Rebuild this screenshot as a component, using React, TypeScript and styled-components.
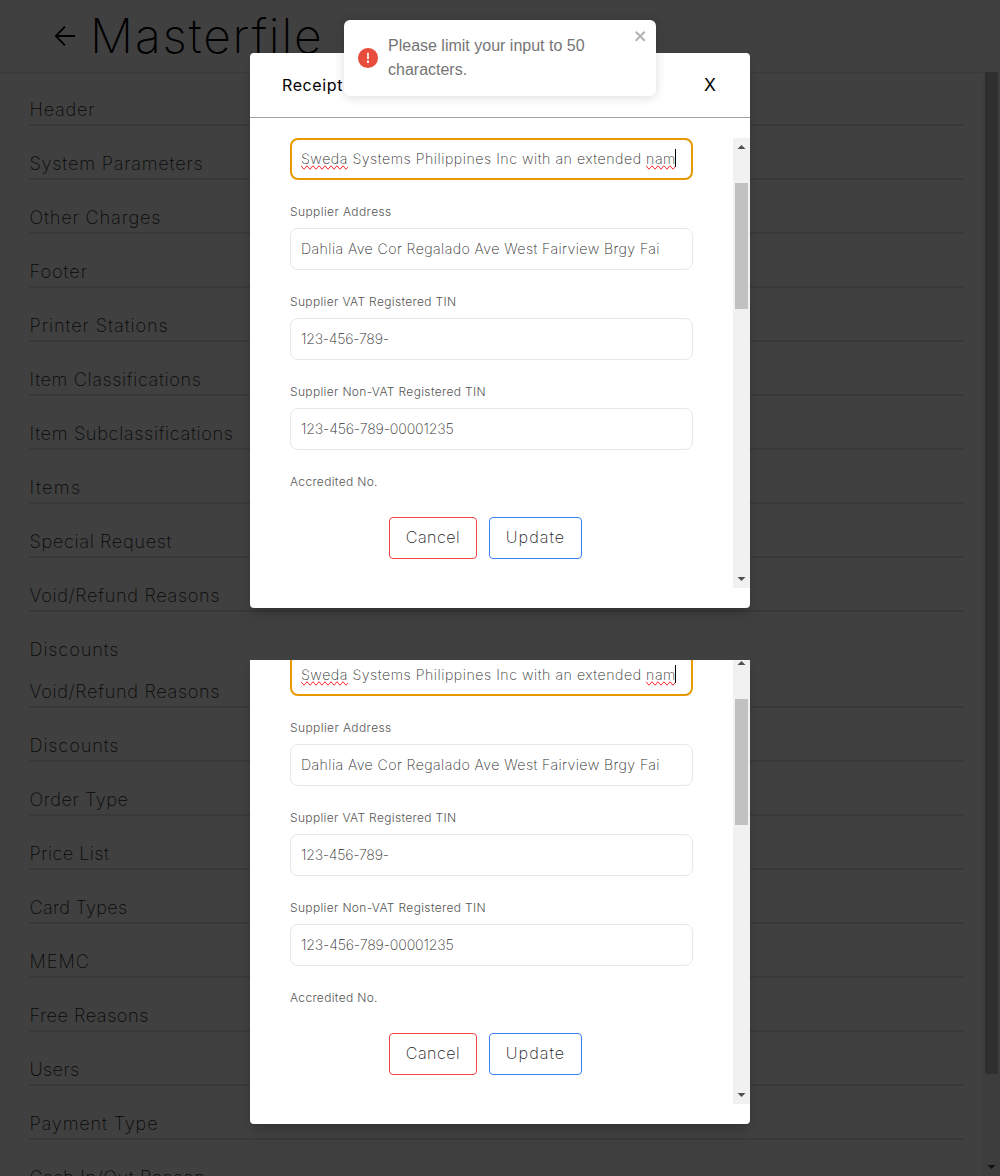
import React from "react";
import styled, { createGlobalStyle } from "styled-components";

const GlobalStyle = createGlobalStyle`
  * { box-sizing: border-box; }
  body {
    margin: 0;
    background: #404040;
    font-family: Inter, "Open Sans", sans-serif;
    font-weight: 300;
  }
`;

const Screen = styled.main`
  width: 1000px;
  height: 1176px;
  display: flex;
  flex-direction: column;
  overflow: hidden;
`;

const Frame = styled.section<{ $height: number }>`
  position: relative;
  flex: none;
  height: ${(p) => p.$height}px;
  display: flex;
  flex-direction: column;
  overflow: hidden;
  background: #404040;
`;

const PageHeader = styled.header`
  flex: none;
  height: 72px;
  padding-left: 53px;
  display: flex;
  align-items: center;
  box-shadow: 0 1px 1px #393939;
`;

const BackIcon = styled.svg`
  width: 24px;
  height: 24px;
  flex: none;
`;

const PageTitle = styled.h1`
  margin: 0 0 0 13px;
  font-size: 48px;
  font-weight: 200;
  line-height: 72px;
  letter-spacing: 1.85px;
  color: #000;
`;

const PageBody = styled.div`
  flex: 1;
  min-height: 0;
  display: flex;
`;

const List = styled.ul<{ $scroll?: number }>`
  flex: 1;
  margin: ${(p) => -(p.$scroll ?? 0)}px 19px 0 29px;
  padding: 0;
  list-style: none;
`;

const ListRow = styled.li<{ $tracking: number }>`
  height: 54px;
  padding: 25px 0 0 0.5px;
  border-bottom: 2px solid #393939;
  font-size: 18.2px;
  font-weight: 250;
  line-height: 24px;
  letter-spacing: ${(p) => p.$tracking}px;
  white-space: nowrap;
  color: #090909;
`;

const PageScrollbar = styled.div<{ $end?: boolean }>`
  width: 17px;
  flex: none;
  display: flex;
  flex-direction: column;
  align-items: center;
  justify-content: space-between;
  padding: 0 2px ${(p) => (p.$end ? 7 : 0)}px;
  background: #3d3d3d;
`;

const PageThumb = styled.div<{ $height: number }>`
  width: 13px;
  height: ${(p) => p.$height}px;
  background: #2f2f2f;
`;

const Modal = styled.div<{ $top: number; $height: number; $cut?: boolean }>`
  position: absolute;
  left: 250px;
  top: ${(p) => p.$top}px;
  width: 500px;
  height: ${(p) => p.$height}px;
  display: flex;
  flex-direction: column;
  justify-content: flex-end;
  overflow: hidden;
  background: #fff;
  border-radius: ${(p) => (p.$cut ? "0 0 4px 4px" : "4px")};
  box-shadow: 0 10px 15px -3px rgba(0, 0, 0, 0.15), 0 4px 6px -2px rgba(0, 0, 0, 0.1);
`;

const ModalHeader = styled.header`
  flex: none;
  height: 65px;
  padding: 0 34px 1px 32px;
  display: flex;
  align-items: center;
  justify-content: space-between;
  border-bottom: 1px solid #a3a3a3;
  font-size: 16px;
  font-weight: 380;
  letter-spacing: 0.6px;
  color: #000;
`;

const CloseButton = styled.span`
  font-size: 17.5px;
  letter-spacing: 0;
`;

const ModalBody = styled.div`
  flex: none;
  height: 490px;
  padding: 20px 0;
  display: flex;
`;

const Form = styled.div`
  flex: 1;
  padding: 0 40px;
`;

const Input = styled.div<{ $focused?: boolean; $tracking: number }>`
  width: 403px;
  height: 42px;
  padding: 0 0 2px ${(p) => (p.$focused ? 9 : 10)}px;
  display: flex;
  align-items: center;
  border: ${(p) => (p.$focused ? "2px solid #e69900" : "1px solid #e5e7eb")};
  border-radius: 8px;
  font-size: 14.2px;
  font-weight: 250;
  letter-spacing: ${(p) => p.$tracking}px;
  white-space: pre;
  color: #303030;
`;

const Misspelled = styled.span`
  text-decoration-line: spelling-error;
`;

const Caret = styled.span`
  width: 1px;
  height: 18px;
  margin-left: -1px;
  background: #000;
`;

const Label = styled.div<{ $tracking: number }>`
  height: 48px;
  padding-top: 24px;
  font-size: 12px;
  line-height: 16px;
  letter-spacing: ${(p) => p.$tracking}px;
  white-space: nowrap;
  color: #565656;
`;

const Actions = styled.div`
  display: flex;
  gap: 12px;
  padding: 19px 0 0 99px;
`;

const Button = styled.button<{ $color: string; $width: number; $tracking: number }>`
  width: ${(p) => p.$width}px;
  height: 42px;
  padding: 0 0 2px;
  border: 1px solid ${(p) => p.$color};
  border-radius: 4px;
  background: #fff;
  font: 250 16.2px Inter, "Open Sans", sans-serif;
  letter-spacing: ${(p) => p.$tracking}px;
  color: #222;
`;

const FormScrollbar = styled.div`
  width: 17px;
  height: 450px;
  padding: 7px 2px;
  display: flex;
  flex-direction: column;
  align-items: center;
  background: #f1f1f1;
`;

const FormThumb = styled.div`
  width: 13px;
  height: 126px;
  margin: 34px 0 auto;
  background: #c1c1c1;
`;

const ScrollArrow = styled.svg`
  width: 9px;
  height: 4px;
  flex: none;
`;

const Toast = styled.div`
  position: absolute;
  left: 344px;
  top: 20px;
  width: 312px;
  height: 76px;
  padding: 14px 8px 14px 14px;
  display: flex;
  background: #fff;
  border-radius: 6px;
  box-shadow: 0 1px 10px rgba(0, 0, 0, 0.1), 0 2px 15px rgba(0, 0, 0, 0.05);
`;

const ToastIcon = styled.svg`
  width: 20px;
  height: 20px;
  flex: none;
  align-self: center;
`;

const ToastText = styled.div`
  flex: 1;
  margin-left: 10px;
  font: 400 16px/24px "Liberation Sans", Arial, sans-serif;
  color: #757575;
`;

const ToastClose = styled.svg`
  width: 14px;
  height: 16px;
  margin-top: -6px;
  flex: none;
`;

type Item = [label: string, tracking: number];

const topItems: Item[] = [
  ["Header", 0.72],
  ["System Parameters", 0.78],
  ["Other Charges", 0.83],
  ["Footer", 0.95],
  ["Printer Stations", 0.92],
  ["Item Classifications", 0.6],
  ["Item Subclassifications", 0.64],
  ["Items", 1.35],
  ["Special Request", 0.63],
  ["Void/Refund Reasons", 0.64],
  ["Discounts", 0.85],
];

const bottomItems: Item[] = [
  ["Void/Refund Reasons", 0.64],
  ["Discounts", 0.85],
  ["Order Type", 0.54],
  ["Price List", 0.42],
  ["Card Types", 0.25],
  ["MEMC", 0.95],
  ["Free Reasons", 0.52],
  ["Users", 0.35],
  ["Payment Type", 0.82],
  ["Cash In/Out Reason", 0.56],
];

const Rows = ({ items, scroll }: { items: Item[]; scroll?: number }) => (
  <List $scroll={scroll}>
    {items.map(([label, tracking]) => (
      <ListRow key={label} $tracking={tracking}>
        {label}
      </ListRow>
    ))}
  </List>
);

const Arrow = ({ down, color = "#505050" }: { down?: boolean; color?: string }) => (
  <ScrollArrow viewBox="0 0 9 4">
    <path d={down ? "M.5 0h8l-4 4z" : "M.5 4h8l-4-4z"} fill={color} />
  </ScrollArrow>
);

const ReceiptForm = () => (
  <ModalBody>
    <Form>
      <Input $focused $tracking={0.52}>
        <Misspelled>Sweda</Misspelled>
        {" Systems Philippines Inc with an extended "}
        <Misspelled>nam</Misspelled>
        <Caret />
      </Input>
      <Label $tracking={0.4}>Supplier Address</Label>
      <Input $tracking={0.4}>Dahlia Ave Cor Regalado Ave West Fairview Brgy Fai</Input>
      <Label $tracking={0.34}>Supplier VAT Registered TIN</Label>
      <Input $tracking={-0.26}>123-456-789-</Input>
      <Label $tracking={0.34}>Supplier Non-VAT Registered TIN</Label>
      <Input $tracking={-0.17}>123-456-789-00001235</Input>
      <Label $tracking={0.33}>Accredited No.</Label>
      <Actions>
        <Button $color="#ef4444" $width={88} $tracking={0.45}>
          Cancel
        </Button>
        <Button $color="#3b82f6" $width={93} $tracking={1.05}>
          Update
        </Button>
      </Actions>
    </Form>
    <FormScrollbar>
      <Arrow />
      <FormThumb />
      <Arrow down />
    </FormScrollbar>
  </ModalBody>
);

export default function App() {
  return (
    <>
      <GlobalStyle />
      <Screen>
        <Frame $height={660}>
          <PageHeader>
            <BackIcon viewBox="0 0 24 24" fill="none" stroke="#000" strokeWidth="1.8">
              <path d="M22 12H3M12 2.6 2.8 12l9.2 9.4" />
            </BackIcon>
            <PageTitle>Masterfile</PageTitle>
          </PageHeader>
          <PageBody>
            <Rows items={topItems} />
            <PageScrollbar>
              <PageThumb $height={588} />
            </PageScrollbar>
          </PageBody>
          <Modal $top={53} $height={555}>
            <ModalHeader>
              <span>Receipt</span>
              <CloseButton>X</CloseButton>
            </ModalHeader>
            <ReceiptForm />
          </Modal>
          <Toast role="alert">
            <ToastIcon viewBox="0 0 24 24" fill="#e74c3c">
              <path d="M11.983 0a12.206 12.206 0 00-8.51 3.653A11.8 11.8 0 000 12.207 11.779 11.779 0 0011.8 24h.214A12.111 12.111 0 0024 11.791 11.766 11.766 0 0011.983 0zM10.5 16.542a1.476 1.476 0 011.449-1.53h.027a1.527 1.527 0 011.523 1.47 1.475 1.475 0 01-1.449 1.53h-.027a1.529 1.529 0 01-1.523-1.47zM11 12.5v-6a1 1 0 012 0v6a1 1 0 11-2 0z" />
            </ToastIcon>
            <ToastText>Please limit your input to 50 characters.</ToastText>
            <ToastClose viewBox="0 0 14 16" fill="#b3b3b3">
              <path
                fillRule="evenodd"
                d="M7.71 8.23l3.75 3.75-1.48 1.48-3.75-3.75-3.75 3.75L1 11.98l3.75-3.75L1 4.48 2.48 3l3.75 3.75L9.98 3l1.48 1.48-3.75 3.75z"
              />
            </ToastClose>
          </Toast>
        </Frame>
        <Frame $height={516}>
          <PageBody>
            <Rows items={bottomItems} scroll={6} />
            <PageScrollbar $end>
              <PageThumb $height={414} />
              <Arrow down color="#111" />
            </PageScrollbar>
          </PageBody>
          <Modal $top={0} $height={464} $cut>
            <ReceiptForm />
          </Modal>
        </Frame>
      </Screen>
    </>
  );
}
